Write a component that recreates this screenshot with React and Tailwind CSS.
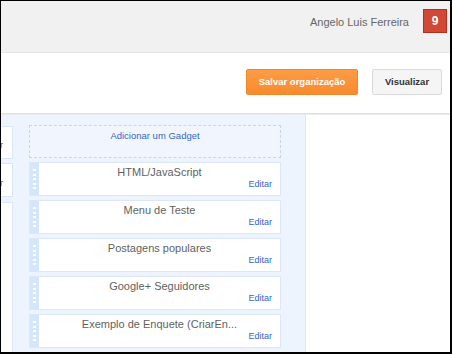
import React from 'react';

const gadgets = [
  'HTML/JavaScript',
  'Menu de Teste',
  'Postagens populares',
  'Google+ Seguidores',
  'Exemplo de Enquete (CriarEn...',
];

function Handle() {
  return (
    <div className="w-[9px] shrink-0 bg-[#d4e6fc] flex flex-col items-center justify-center gap-[2.5px]">
      {[0, 1, 2, 3, 4].map((i) => (
        <span key={i} className="block w-[3px] h-[2px] bg-white" />
      ))}
    </div>
  );
}

function GadgetRow({ title }) {
  return (
    <div className="h-[34px] shrink-0 flex border border-[#dce8f9] bg-white">
      <Handle />
      <div className="flex-1 flex flex-col min-w-0">
        <div className="pt-[3px] text-center text-[11px] leading-[13px] text-[#5f5f5f] whitespace-nowrap overflow-hidden">
          {title}
        </div>
        <div className="self-end pr-[8px] text-[9px] leading-[10px] text-[#3366cc]">Editar</div>
      </div>
    </div>
  );
}

export default function App() {
  return (
    <div
      className="w-[452px] h-[354px] overflow-hidden bg-white border-black border-t border-l border-r-2 border-b-2 flex flex-col"
      style={{ fontFamily: '"Liberation Sans", Arial, sans-serif' }}
    >
      {/* top bar */}
      <div className="h-[52px] shrink-0 bg-[#f1f1f1] border-b border-[#e4e4e4] flex justify-end items-start pt-[8px] pr-[3px] gap-[14px]">
        <span className="mt-[7px] text-[11px] leading-[13px] text-[#666]">Angelo Luis Ferreira</span>
        <div className="w-[24px] h-[24px] bg-[#d14836] border border-[#b3301f] flex items-center justify-center text-white font-bold text-[12px]">
          9
        </div>
      </div>

      {/* toolbar */}
      <div className="h-[60px] shrink-0 flex justify-end items-start pt-[16px] pr-[8px] gap-[14px]">
        <button className="w-[112px] h-[26px] bg-gradient-to-b from-[#fd9c45] to-[#f78b2d] border border-[#f2862b] rounded-[2px] text-white font-bold text-[9.5px]">
          Salvar organização
        </button>
        <button className="w-[70px] h-[26px] bg-[#f5f5f5] border border-[#dadada] rounded-[2px] text-[#333] font-bold text-[9.5px]">
          Visualizar
        </button>
      </div>

      {/* shadow */}
      <div className="h-[2px] shrink-0 bg-gradient-to-b from-[#dcdcdc] to-[#eeeeee]" />

      {/* body */}
      <div className="flex-1 flex min-h-0">
        <div className="w-[305px] shrink-0 bg-[#edf4fe] border-r border-[#dbe6f7] flex pt-[10px] gap-[16px] overflow-hidden">
          {/* left column, cut off at the page edge */}
          <div className="w-[12px] shrink-0 flex flex-col mt-[1px]">
            <div className="h-[33px] mb-[4px] bg-white border border-l-0 border-[#dbe7f8] flex flex-col justify-end items-end pb-[8px] pr-[9px] overflow-hidden">
              <span className="text-[9px] leading-[10px] text-[#3366cc]">r</span>
            </div>
            <div className="h-[34px] mb-[5px] bg-white border border-l-0 border-[#dbe7f8] flex flex-col justify-end items-end pb-[8px] pr-[9px] overflow-hidden">
              <span className="text-[9px] leading-[10px] text-[#3366cc]">r</span>
            </div>
            <div className="flex-1 bg-white border border-l-0 border-b-0 border-[#dbe7f8]" />
          </div>

          {/* main column */}
          <div className="w-[252px] shrink-0 flex flex-col gap-[4px]">
            <div className="h-[33px] shrink-0 border border-dashed border-[#c6d6ee] bg-[#f1f6fe] text-center pt-[4px] text-[9.5px] leading-[11px] text-[#3366cc]">
              Adicionar um Gadget
            </div>
            {gadgets.map((g) => (
              <GadgetRow key={g} title={g} />
            ))}
            <div className="h-[34px] shrink-0 flex border border-[#dce8f9] bg-white">
              <Handle />
            </div>
          </div>
        </div>
        <div className="flex-1 bg-white" />
      </div>
    </div>
  );
}
